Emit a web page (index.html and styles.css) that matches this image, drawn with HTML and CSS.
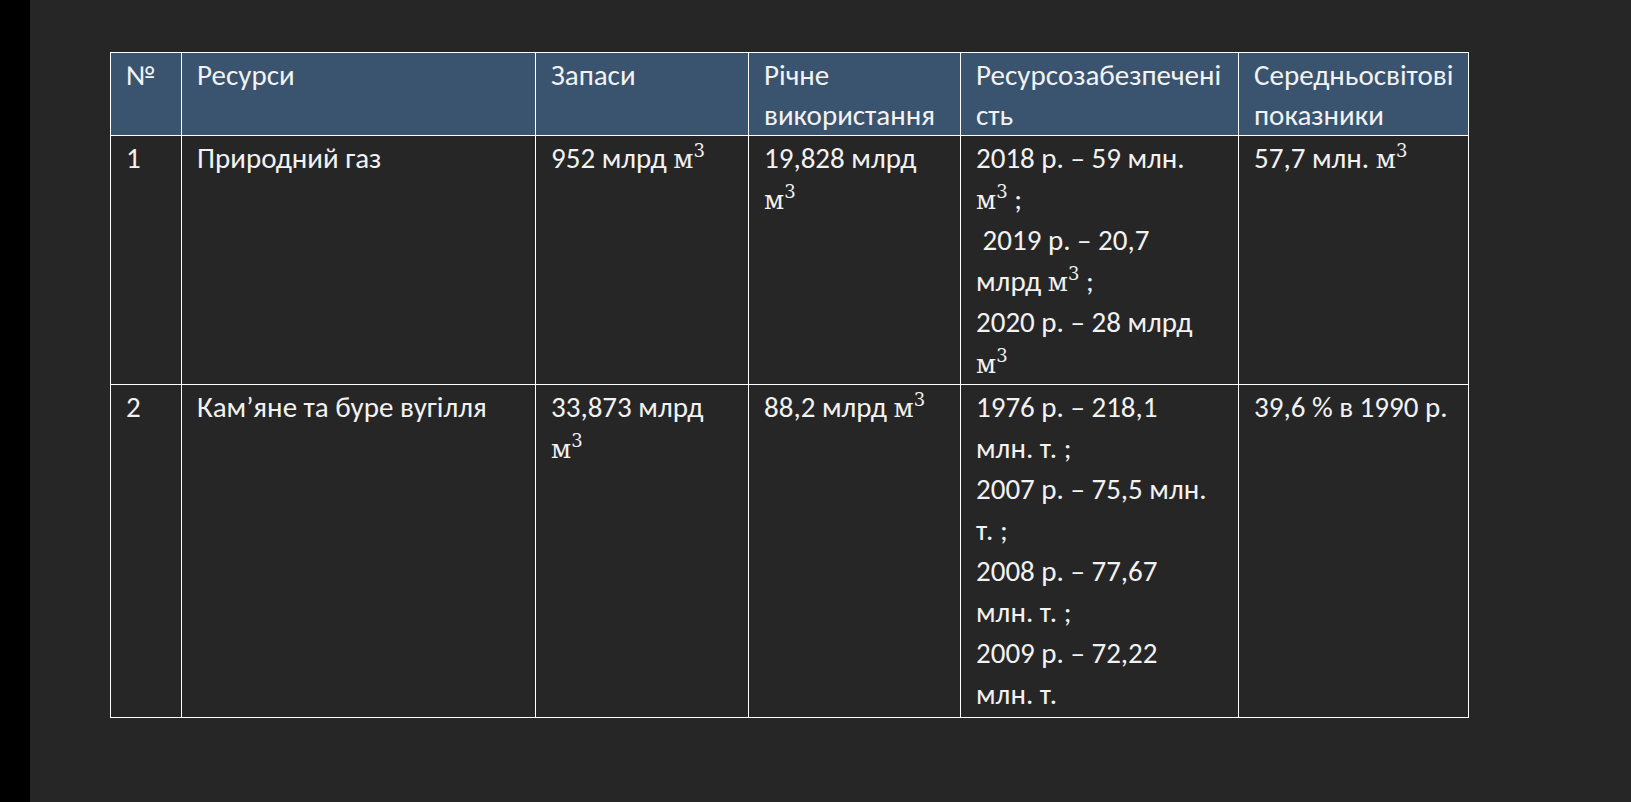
FILE: index.html
```html
<!DOCTYPE html>
<html lang="uk">
<head>
<meta charset="utf-8">
<title>Ресурси</title>
<link rel="stylesheet" href="styles.css">
</head>
<body>
<div class="page">
  <div class="strip"></div>
  <main class="main">
    <table class="res">
      <colgroup>
        <col class="c0"><col class="c1"><col class="c2"><col class="c3"><col class="c4"><col class="c5">
      </colgroup>
      <thead>
        <tr>
          <th>№</th>
          <th>Ресурси</th>
          <th>Запаси</th>
          <th>Річне<br>використання</th>
          <th>Ресурсозабезпечені<br>сть</th>
          <th>Середньосвітові<br>показники</th>
        </tr>
      </thead>
      <tbody>
        <tr>
          <td>1</td>
          <td>Природний газ</td>
          <td>952 млрд <span class="m">м<sup>3</sup></span></td>
          <td>19,828 млрд<br><span class="m">м<sup>3</sup></span></td>
          <td>2018 р. – 59 млн.<br><span class="m">м<sup>3</sup></span> ;<br>&nbsp;2019 р. – 20,7<br>млрд <span class="m">м<sup>3</sup></span> ;<br>2020 р. – 28 млрд<br><span class="m">м<sup>3</sup></span></td>
          <td>57,7 млн. <span class="m">м<sup>3</sup></span></td>
        </tr>
        <tr>
          <td>2</td>
          <td>Кам’яне та буре вугілля</td>
          <td>33,873 млрд<br><span class="m">м<sup>3</sup></span></td>
          <td>88,2 млрд <span class="m">м<sup>3</sup></span></td>
          <td>1976 р. – 218,1<br>млн. т. ;<br>2007 р. – 75,5 млн.<br>т. ;<br>2008 р. – 77,67<br>млн. т. ;<br>2009 р. – 72,22<br>млн. т.</td>
          <td>39,6 % в 1990 р.</td>
        </tr>
      </tbody>
    </table>
  </main>
</div>
</body>
</html>
```
FILE: styles.css
```css
html, body {
  margin: 0;
  padding: 0;
  height: 100%;
  background: #262626;
}
.page {
  display: flex;
  min-height: 100vh;
}
.strip {
  width: 30px;
  flex: none;
  background: #000;
}
.main {
  flex: 1;
  padding: 52px 0 0 80px;
}
.res {
  border-collapse: collapse;
  table-layout: fixed;
  width: 1358px;
  font-family: Carlito, Lato, "Open Sans", sans-serif;
  font-size: 29px;
  line-height: 41px;
  color: #f2f2f2;
}
.c0 { width: 71px; }
.c1 { width: 354px; }
.c2 { width: 213px; }
.c3 { width: 212px; }
.c4 { width: 278px; }
.c5 { width: 230px; }
.res th, .res td {
  border: 1px solid #ffffff;
  padding: 2px 4px 0 15px;
  text-align: left;
  vertical-align: top;
  font-weight: normal;
  white-space: nowrap;
}
.res thead th {
  background: #3a546f;
  line-height: 40px;
}
.res tbody td {
  background: #262626;
}
.res thead tr { height: 82px; }
.res tbody tr:first-child { height: 249px; }
.res tbody tr:last-child { height: 333px; }
.m {
  font-family: "DejaVu Serif", "Liberation Serif", serif;
  font-size: 26px;
  line-height: 20px;
}
.m sup {
  font-size: 18px;
  line-height: 0;
  vertical-align: 11px;
}
```
